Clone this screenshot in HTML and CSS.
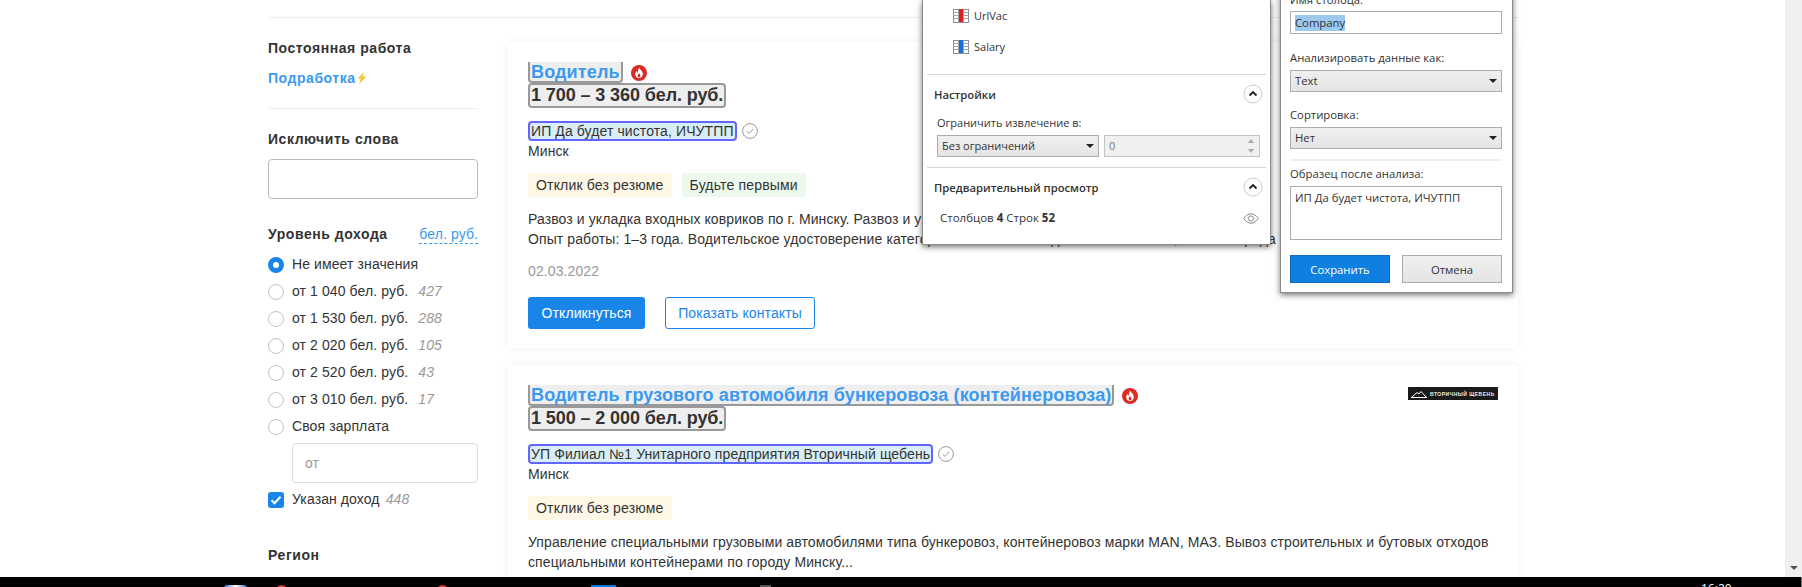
FILE: index.html
```html
<!DOCTYPE html>
<html lang="ru">
<head>
    <meta charset="UTF-8">
    <title>Вакансии</title>
    <link rel="stylesheet" href="styles.css">
</head>
<body>
<svg class="sprites" width="0" height="0">
    <symbol id="fire" viewBox="0 0 16 16">
        <circle cx="8" cy="8" r="8" fill="#dc2a25"/>
        <path d="M8.200 2.600c.3 1.900 3.600 3.400 3.600 6.600 0 2.300-1.700 3.900-3.800 3.900s-3.800-1.600-3.800-3.800c0-1.500.8-2.600 1.600-3.400.1 1 .5 1.600 1 1.900.1-1.900.5-3.800 1.400-5.200z" fill="#fff"/>
        <path d="M8 8c.2.8 1.400 1.400 1.400 2.800 0 .9-.6 1.500-1.400 1.500s-1.400-.6-1.400-1.500c0-1.100.9-1.800 1.400-2.800z" fill="#dc2a25"/>
    </symbol>
    <symbol id="verified" viewBox="0 0 16 16">
        <circle cx="8" cy="8" r="7.400" fill="none" stroke="#999" stroke-width="1"/>
        <path d="M4.800 8.200l2.300 2.200 4.200-4.600" fill="none" stroke="#999" stroke-width="1"/>
    </symbol>
    <symbol id="chevron" viewBox="0 0 20 20">
        <circle cx="10" cy="10" r="9" fill="#fff" stroke="#ccc"/>
        <path d="M6.500 11.500L10 8l3.500 3.500" fill="none" stroke="#222" stroke-width="1.800"/>
    </symbol>
    <symbol id="table" viewBox="0 0 16 14">
        <rect x=".5" y=".5" width="15" height="13" fill="#fff" stroke="#8a8a8a"/>
        <path d="M0 3.500h16M0 6.500h16M0 9.500h16M5.500 0v14M10.500 0v14" stroke="#a5a5a5"/>
    </symbol>
</svg>

<div class="screen">
    <div class="viewport">
        <div class="page">
            <div class="topline"></div>
            <div class="columns">
                <aside class="sidebar">
                    <div class="side-title">Постоянная работа</div>
                    <div class="side-link">Подработка
                        <svg class="bolt" width="10" height="12" viewBox="0 0 10 12"><path d="M6.800 0L.5 6.800h3.300L2.200 12 9.500 4.600H6z" fill="#f3c63f"/></svg>
                    </div>
                    <div class="side-sep"></div>

                    <div class="side-title">Исключить слова</div>
                    <div class="text-box"></div>

                    <div class="side-title income-head">Уровень дохода <span class="currency">бел. руб.</span></div>
                    <ul class="options">
                        <li><span class="radio radio-on"></span>Не имеет значения</li>
                        <li><span class="radio"></span>от 1 040 бел. руб. <em>427</em></li>
                        <li><span class="radio"></span>от 1 530 бел. руб. <em>288</em></li>
                        <li><span class="radio"></span>от 2 020 бел. руб. <em>105</em></li>
                        <li><span class="radio"></span>от 2 520 бел. руб. <em>43</em></li>
                        <li><span class="radio"></span>от 3 010 бел. руб. <em>17</em></li>
                        <li><span class="radio"></span>Своя зарплата</li>
                    </ul>
                    <div class="text-box salary-from">от</div>
                    <div class="check-row">
                        <span class="checkbox"><svg width="12" height="10" viewBox="0 0 12 10"><path d="M1.500 5.200l3 3 6-6.500" fill="none" stroke="#fff" stroke-width="2"/></svg></span>Указан доход <em>448</em>
                    </div>
                    <div class="side-title region">Регион</div>
                </aside>

                <main class="results">
                    <article class="card">
                        <div class="card-head">
                            <a class="job-title">Водитель</a>
                            <svg class="fire"><use href="#fire"/></svg>
                        </div>
                        <div class="pay"><span>1 700 – 3 360 бел. руб.</span></div>
                        <div class="company"><span>ИП Да будет чистота, ИЧУТПП</span><svg class="verified"><use href="#verified"/></svg></div>
                        <div class="city">Минск</div>
                        <div class="tags">
                            <span class="tag tag-yellow">Отклик без резюме</span>
                            <span class="tag tag-green">Будьте первыми</span>
                        </div>
                        <p class="desc">Развоз и укладка входных ковриков по г. Минску. Развоз и укладка входных ковриков по организациям.<br>Опыт работы: 1–3 года. Водительское удостоверение категории В. Навыки вождения автомобиля, знание города и дисциплинированность.</p>
                        <div class="date">02.03.2022</div>
                        <div class="actions">
                            <button class="btn btn-primary">Откликнуться</button>
                            <button class="btn btn-outline">Показать контакты</button>
                        </div>
                    </article>

                    <article class="card">
                        <div class="card-head">
                            <a class="job-title">Водитель грузового автомобиля бункеровоза (контейнеровоза)</a>
                            <svg class="fire"><use href="#fire"/></svg>
                            <div class="logo">
                                <svg width="16" height="8" viewBox="0 0 16 8"><path d="M0 7.500h16M1 7L6 2.500 8 4l2-2.500L15 7" fill="none" stroke="#fff"/></svg>
                                <span>ВТОРИЧНЫЙ ЩЕБЕНЬ</span>
                            </div>
                        </div>
                        <div class="pay"><span>1 500 – 2 000 бел. руб.</span></div>
                        <div class="company"><span>УП Филиал №1 Унитарного предприятия Вторичный щебень</span><svg class="verified"><use href="#verified"/></svg></div>
                        <div class="city">Минск</div>
                        <div class="tags">
                            <span class="tag tag-yellow">Отклик без резюме</span>
                        </div>
                        <p class="desc">Управление специальными грузовыми автомобилями типа бункеровоз, контейнеровоз марки MAN, МАЗ. Вывоз строительных и бутовых отходов специальными контейнерами по городу Минску...</p>
                    </article>
                </main>
            </div>
        </div>
        <div class="scrollbar"><span class="scroll-arrow"></span></div>
    </div>

    <div class="taskbar">
        <span class="tb-item tb-start"></span>
        <span class="tb-item tb-red tb-red-1"></span>
        <span class="tb-item tb-red tb-red-2"></span>
        <span class="tb-item tb-blue"></span>
        <span class="tb-item tb-gray"></span>
        <span class="tb-clock">16:20</span>
        <span class="tb-line"></span>
    </div>

    <!-- окна поверх страницы -->
    <section class="win win-nav">
        <div class="table-row"><svg class="table-icon"><use href="#table"/></svg><i class="mark mark-red"></i>UrlVac</div>
        <div class="table-row"><svg class="table-icon"><use href="#table"/></svg><i class="mark mark-blue"></i>Salary</div>
        <div class="win-sep"></div>
        <div class="win-head">Настройки <svg class="chevron"><use href="#chevron"/></svg></div>
        <div class="win-sub">Ограничить извлечение в:</div>
        <div class="limit-row">
            <div class="combo combo-limit">Без ограничений</div>
            <div class="spin">0<span class="spin-arrows"></span></div>
        </div>
        <div class="win-sep win-sep-2"></div>
        <div class="win-head">Предварительный просмотр <svg class="chevron"><use href="#chevron"/></svg></div>
        <div class="stats">
            <span>Столбцов <b>4</b> Строк <b>52</b></span>
            <svg width="16" height="11" viewBox="0 0 16 11"><path d="M.8 5.500C3 2.200 5.300.8 8 .8s5 1.400 7.200 4.700C13 8.800 10.700 10.200 8 10.200S3 8.800.8 5.500z" fill="none" stroke="#8a8a8a"/><circle cx="8" cy="5.500" r="2.600" fill="none" stroke="#8a8a8a"/></svg>
        </div>
    </section>

    <section class="win win-column">
        <div class="win-label">Имя столбца:</div>
        <div class="field field-name"><span class="selected">Company</span></div>
        <div class="win-label">Анализировать данные как:</div>
        <div class="combo">Text</div>
        <div class="win-label label-gap">Сортировка:</div>
        <div class="combo">Нет</div>
        <div class="win-rule"></div>
        <div class="win-label">Образец после анализа:</div>
        <div class="field field-sample">ИП Да будет чистота, ИЧУТПП</div>
        <div class="win-buttons">
            <button class="win-btn win-btn-save">Сохранить</button>
            <button class="win-btn">Отмена</button>
        </div>
    </section>
</div>
</body>
</html>
```

FILE: styles.css
```css
* {
    box-sizing: border-box;
}

html, body {
    margin: 0;
    padding: 0;
    background-color: #fff;
    overflow: hidden;
}

.sprites {
    position: absolute;
}

.screen {
    position: relative;
    width: 1802px;
    height: 587px;
    overflow: hidden;
    display: flex;
    flex-direction: column;
    font-family: "Liberation Sans", Arial, sans-serif;
    font-size: 14px;
    letter-spacing: 0.1px;
    color: #333;
}

.viewport {
    flex: 1;
    min-height: 0;
    display: flex;
}

.page {
    flex: 1;
    overflow: hidden;
    padding-left: 268px;
}

.topline {
    width: 1250px;
    margin-top: 17px;
    border-top: 1px solid #eee;
}

.columns {
    display: flex;
    gap: 30px;
}

/* левая колонка */
.sidebar {
    width: 210px;
    flex-shrink: 0;
    padding-top: 20px;
}

.side-title {
    font-weight: bold;
    line-height: 20px;
    letter-spacing: 0.55px;
}

.side-link {
    margin-top: 10px;
    font-weight: bold;
    line-height: 20px;
    letter-spacing: 0.55px;
    color: #3b9af0;
}

.bolt {
    margin-left: -3px;
    vertical-align: -1px;
}

.side-sep {
    margin: 20px 0;
    border-top: 1px solid #eee;
}

.text-box {
    height: 40px;
    margin-top: 10px;
    border: 1px solid #bbb;
    border-radius: 4px;
}

.income-head {
    display: flex;
    justify-content: space-between;
    margin-top: 25px;
}

.currency {
    height: 20px;
    font-weight: normal;
    letter-spacing: 0.1px;
    color: #3b9af0;
    border-bottom: 1px dashed #3b9af0;
}

.options {
    list-style: none;
    margin: 7px 0 0;
    padding: 0;
}

.options li, .check-row {
    display: flex;
    align-items: center;
    height: 27px;
    padding-bottom: 1px;
    white-space: pre;
}

em {
    margin-left: 6px;
    color: #999;
}

.radio {
    width: 16px;
    height: 16px;
    margin: 1px 8px 0 0;
    border: 1px solid #c4c4c4;
    border-radius: 50%;
}

.radio-on {
    border: 5px solid #1a85e8;
}

.salary-from {
    margin: 3px 0 0 24px;
    padding-left: 12px;
    line-height: 38px;
    border-color: #ddd;
    color: #999;
}

.check-row {
    margin-top: 3px;
}

.check-row em {
    margin-left: 2px;
}

.checkbox {
    display: flex;
    align-items: center;
    justify-content: center;
    width: 16px;
    height: 16px;
    margin: 1px 8px 0 0;
    border-radius: 3px;
    background-color: #1a85e8;
}

.region {
    margin-top: 32px;
}

/* вакансии */
.results {
    width: 1010px;
    margin-top: 24px;
}

.card {
    padding: 20px 20px 19px;
    margin-bottom: 17px;
    background-color: #fff;
    border-radius: 4px;
    box-shadow: 0 0 8px rgba(0, 30, 60, 0.06);
}

.card-head {
    display: flex;
    align-items: flex-start;
    height: 21px;
}

.job-title {
    height: 21px;
    padding: 0 1px;
    font-size: 18px;
    font-weight: bold;
    line-height: 20px;
    letter-spacing: 0.14px;
    color: #3b9af0;
    background-color: #eee;
    border: 2px solid #999;
    border-top: 0;
    border-radius: 0 0 4px 4px;
    white-space: nowrap;
}

.fire {
    width: 16px;
    height: 16px;
    margin: 3px 0 0 8px;
}

.logo {
    display: flex;
    align-items: center;
    gap: 3px;
    width: 90px;
    height: 13px;
    margin: 2px 0 0 auto;
    padding-left: 3px;
    background-color: #1a1a1a;
}

.logo span {
    font-size: 5px;
    font-weight: bold;
    letter-spacing: 0.5px;
    color: #eee;
    white-space: nowrap;
}

.pay {
    height: 25px;
}

.pay span {
    display: inline-block;
    height: 25px;
    padding: 0 1px;
    font-size: 18px;
    font-weight: bold;
    line-height: 21px;
    letter-spacing: -0.1px;
    background-color: #eee;
    border: 2px solid #999;
    border-radius: 4px;
}

.company {
    display: flex;
    align-items: center;
    margin-top: 13px;
}

.company span {
    height: 20px;
    padding: 0 1px;
    line-height: 17px;
    background-color: #d9edf5;
    border: 2px solid #6464ff;
    border-radius: 4px;
}

.verified {
    width: 16px;
    height: 16px;
    margin-left: 5px;
}

.city {
    line-height: 20px;
}

.tags {
    display: flex;
    gap: 10px;
    margin-top: 12px;
    letter-spacing: 0.17px;
}

.tag {
    height: 24px;
    padding: 0 8px;
    line-height: 24px;
    border-radius: 3px;
}

.tag-yellow {
    background-color: #fff7e6;
}

.tag-green {
    background-color: #edf9ec;
}

.desc {
    margin: 12px 0 0;
    line-height: 20px;
    white-space: nowrap;
}

.card:last-child .desc {
    white-space: normal;
}

.date {
    margin-top: 12px;
    line-height: 20px;
    color: #999;
}

.actions {
    display: flex;
    gap: 20px;
    margin-top: 16px;
}

.btn {
    height: 32px;
    padding: 0;
    font: inherit;
    letter-spacing: inherit;
    white-space: nowrap;
    border-radius: 3px;
}

.btn-primary {
    width: 117px;
    color: #fff;
    background-color: #1a85e8;
    border: none;
}

.btn-outline {
    width: 150px;
    color: #1a85e8;
    background-color: #fff;
    border: 1px solid #1a85e8;
}

/* полоса прокрутки */
.scrollbar {
    width: 17px;
    display: flex;
    justify-content: center;
    align-items: flex-end;
    padding-bottom: 7px;
    background-color: #f0f0f0;
}

.scroll-arrow {
    border: 4px solid transparent;
    border-top: 4px solid #505050;
    border-bottom: 0;
}

/* панель задач */
.taskbar {
    display: flex;
    height: 10px;
    padding-left: 224px;
    overflow: hidden;
    background-color: #000;
}

.tb-item {
    height: 10px;
    margin-top: 8px;
}

.tb-start {
    width: 23px;
    background: linear-gradient(90deg, #2a6bd0, #fff 50%, #2a6bd0);
    border-radius: 3px 3px 0 0;
}

.tb-red {
    width: 13px;
    background-color: #d33a30;
    border-radius: 7px 7px 0 0;
}

.tb-red-1 {
    margin-left: 28px;
}

.tb-red-2 {
    margin-left: 148px;
}

.tb-blue {
    width: 25px;
    margin-left: 142px;
    background-color: #0a78d7;
}

.tb-gray {
    width: 11px;
    margin-left: 144px;
    background-color: #555;
}

.tb-clock {
    margin: 4px 0 0 930px;
    font-family: "Open Sans", sans-serif;
    font-size: 12px;
    line-height: 16px;
    letter-spacing: 0;
    color: #fff;
}

.tb-line {
    width: 1px;
    margin-left: 69px;
    background-color: #777;
}

/* окна */
.win {
    position: absolute;
    background-color: #fff;
    border: 1px solid #8a8a8a;
    border-top: 0;
    box-shadow: 0 2px 6px rgba(0, 0, 0, 0.55);
    font-family: "Open Sans", "Noto Sans", sans-serif;
    font-size: 11px;
    letter-spacing: 0;
    color: #333;
}

.win-nav {
    left: 922px;
    top: 0;
    width: 349px;
    height: 245px;
}

.table-row {
    position: relative;
    display: flex;
    align-items: center;
    height: 31px;
    padding-left: 30px;
}

.table-icon {
    width: 16px;
    height: 14px;
    margin-right: 5px;
}

.mark {
    position: absolute;
    left: 36px;
    top: 9px;
    width: 4px;
    height: 13px;
}

.mark-red {
    background-color: #e01f26;
}

.mark-blue {
    background-color: #1a6fd8;
}

.win-sep {
    margin: 12px 4px 0;
    border-top: 1px solid #d6d6d6;
}

.win-sep-2 {
    margin-top: 10px;
}

.win-head {
    display: flex;
    align-items: center;
    justify-content: space-between;
    height: 24px;
    margin-top: 7px;
    padding: 0 7px 0 11px;
    font-weight: 600;
    font-size: 11.250px;
}

.chevron {
    width: 20px;
    height: 20px;
}

.win-sub {
    margin: 9px 0 0 14px;
    line-height: 16px;
}

.limit-row {
    display: flex;
    gap: 5px;
    margin: 4px 0 0 14px;
}

.combo {
    position: relative;
    height: 22px;
    padding-left: 4px;
    line-height: 20px;
    background: linear-gradient(#f0f0f0, #e4e4e4);
    border: 1px solid #acacac;
}

.combo::after {
    content: "";
    position: absolute;
    right: 4px;
    top: 8px;
    border: 4px solid transparent;
    border-top: 4px solid #222;
    border-bottom: 0;
}

.combo-limit {
    width: 162px;
}

.spin {
    position: relative;
    width: 156px;
    height: 22px;
    padding-left: 4px;
    line-height: 20px;
    color: #777;
    background-color: #f0f0f0;
    border: 1px solid #c4c4c4;
}

.spin-arrows::before, .spin-arrows::after {
    content: "";
    position: absolute;
    right: 5px;
    border: 3.500px solid transparent;
}

.spin-arrows::before {
    top: 3px;
    border-bottom: 4px solid #aaa;
    border-top: 0;
}

.spin-arrows::after {
    bottom: 3px;
    border-top: 4px solid #aaa;
    border-bottom: 0;
}

.stats {
    display: flex;
    justify-content: space-between;
    align-items: center;
    margin-top: 11px;
    padding: 0 11px 0 17px;
    font-size: 11.500px;
    line-height: 16px;
}

.win-column {
    left: 1280px;
    top: -8px;
    width: 233px;
    height: 301px;
    padding: 0 10px 0 9px;
    font-size: 11.300px;
}

.win-label {
    line-height: 16px;
}

.label-gap {
    margin-top: 15px;
}

.win-column .combo {
    margin-top: 4px;
}

.field {
    padding-left: 4px;
    background-color: #fff;
    border: 1px solid #acacac;
}

.field-name {
    height: 23px;
    margin-top: 3px;
    margin-bottom: 16px;
    line-height: 21px;
}

.selected {
    display: inline-block;
    height: 16px;
    line-height: 15px;
    background-color: #9cc9ef;
}

.field-sample {
    height: 54px;
    margin-top: 4px;
    padding-top: 3px;
    line-height: 16px;
}

.win-rule {
    margin: 10px 0 5px;
    border-top: 2px solid #eee;
}

.win-buttons {
    display: flex;
    justify-content: space-between;
    margin-top: 15px;
}

.win-btn {
    width: 100px;
    height: 28px;
    font: inherit;
    color: #333;
    background: linear-gradient(#f0f0f0, #e4e4e4);
    border: 1px solid #acacac;
}

.win-btn-save {
    color: #fff;
    background: #0f7fe0;
    border-color: #0f6cc0;
}
```
